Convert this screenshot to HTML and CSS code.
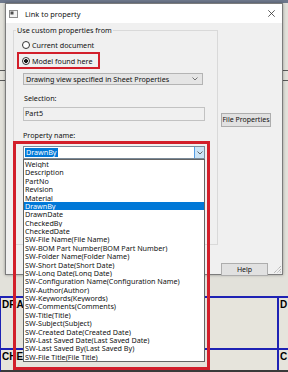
FILE: index.html
```html
<!DOCTYPE html>
<html>
<head>
<meta charset="utf-8">
<link rel="stylesheet" href="styles.css">
</head>
<body>
<div class="desk">
  <div class="top-strip"></div>
  <div class="sheet-upper"><div class="rule-pair"></div></div>
  <div class="title-row row-drawn">
    <div class="cell cell-main">DRA</div>
    <div class="cell cell-side">D</div>
  </div>
  <div class="title-row row-checked">
    <div class="cell cell-main">CHE</div>
    <div class="cell cell-side">C</div>
  </div>

  <div class="dialog">
    <div class="titlebar">
      <svg class="app-icon" width="9" height="8" viewBox="0 0 9 8"><rect x="0.5" y="0.5" width="8" height="7" fill="#f2f2f2" stroke="#8c8c8c"/><rect x="1.5" y="1.5" width="3" height="3" fill="#4d4d4d"/></svg>
      <span class="title">Link to property</span>
      <svg class="close" width="7" height="7" viewBox="0 0 7 7"><path d="M0.3 0.3 L6.7 6.7 M6.7 0.3 L0.3 6.7" stroke="#333" stroke-width="0.8" fill="none"/></svg>
    </div>
    <div class="dialog-body">
      <div class="group">
        <div class="group-label">Use custom properties from</div>
        <div class="radio-row"><span class="radio"></span>Current document</div>
        <div class="radio-row radio-marked"><span class="radio checked"></span>Model found here</div>
        <div class="select"><span>Drawing view specified in Sheet Properties</span><svg class="chev" width="6" height="4" viewBox="0 0 6 4"><path d="M0.5 0.5 L3 3 L5.5 0.5" stroke="#555" stroke-width="0.8" fill="none"/></svg></div>
        <div class="field-label">Selection:</div>
        <div class="textbox">Part5</div>
        <div class="field-label field-label-prop">Property name:</div>
        <div class="combo">
          <span class="combo-value">DrawnBy</span>
          <span class="combo-btn"><svg width="6" height="4" viewBox="0 0 6 4"><path d="M0.5 0.5 L3 3 L5.5 0.5" stroke="#444" stroke-width="0.8" fill="none"/></svg></span>
          <ul class="combo-list">
            <li>Weight</li>
            <li>Description</li>
            <li>PartNo</li>
            <li>Revision</li>
            <li>Material</li>
            <li class="selected">DrawnBy</li>
            <li>DrawnDate</li>
            <li>CheckedBy</li>
            <li>CheckedDate</li>
            <li>SW-File Name(File Name)</li>
            <li>SW-BOM Part Number(BOM Part Number)</li>
            <li>SW-Folder Name(Folder Name)</li>
            <li>SW-Short Date(Short Date)</li>
            <li>SW-Long Date(Long Date)</li>
            <li>SW-Configuration Name(Configuration Name)</li>
            <li>SW-Author(Author)</li>
            <li>SW-Keywords(Keywords)</li>
            <li>SW-Comments(Comments)</li>
            <li>SW-Title(Title)</li>
            <li>SW-Subject(Subject)</li>
            <li>SW-Created Date(Created Date)</li>
            <li>SW-Last Saved Date(Last Saved Date)</li>
            <li>SW-Last Saved By(Last Saved By)</li>
            <li>SW-File Title(File Title)</li>
          </ul>
          <div class="mark-box"></div>
        </div>
      </div>
      <div class="side">
        <button class="btn btn-fileprops">File Properties</button>
        <button class="btn btn-help">Help</button>
      </div>
    </div>
    <svg class="grip" width="8" height="8" viewBox="0 0 8 8"><path d="M8 1 L1 8 M8 4 L4 8 M8 6.5 L6.5 8" stroke="#8a8a8a" stroke-width="0.8" stroke-dasharray="1 0.8" fill="none"/></svg>
  </div>
</div>
</body>
</html>
```

FILE: styles.css
```css
html, body {
  margin: 0;
  padding: 0;
}

body {
  width: 288px;
  height: 372px;
  overflow: hidden;
  font-family: "Noto Sans", "DejaVu Sans", sans-serif;
  font-size: 7.2px;
  color: #111;
}

.desk {
  position: relative;
  width: 288px;
  height: 372px;
  overflow: hidden;
  background: #e4e2da;
  display: flex;
  flex-direction: column;
}

.top-strip {
  height: 3px;
  background: #6e788c;
}

.sheet-upper {
  height: 293px;
  background: #e2e1da;
}

.rule-pair {
  margin-top: 67px;
  height: 9px;
  border-top: 1px solid #5a5a5a;
  border-bottom: 1px solid #5a5a5a;
}

.title-row {
  display: flex;
  border-top: 2px solid #1e22b4;
  border-left: 1px solid #1e22b4;
  background: #e6e4dc;
  font-family: "Liberation Sans", Arial, sans-serif;
  font-weight: bold;
  font-size: 10px;
  line-height: 12px;
  color: #000;
}

.row-drawn {
  height: 50px;
}

.row-checked {
  height: 20px;
  border-bottom: 2px solid #3a3a3a;
}

.cell {
  padding: 1px 0 0 1px;
  overflow: hidden;
  white-space: nowrap;
}

.cell-main {
  width: 275px;
  border-right: 2px solid #1e22b4;
}

.cell-side {
  flex: 1;
}

.dialog {
  position: absolute;
  left: 5px;
  top: 3px;
  width: 278px;
  height: 272px;
  box-sizing: border-box;
  border: 1px solid #7c7c7c;
  background: #f0f0f0;
  box-shadow: 0 0 3px rgba(0, 0, 0, 0.35);
  display: flex;
  flex-direction: column;
}

.titlebar {
  height: 19px;
  flex: none;
  background: #ffffff;
  display: flex;
  align-items: center;
  padding: 0 7px 0 3px;
}

.app-icon {
  display: block;
  flex: none;
}

.title {
  margin-left: 7px;
  font-size: 7.4px;
}

.close {
  display: block;
  margin-left: auto;
}

.dialog-body {
  display: flex;
  align-items: flex-start;
  padding: 7px 0 0 7px;
}

.group {
  width: 205px;
  height: 215px;
  box-sizing: border-box;
  border: 1px solid #d9d9d9;
  flex: none;
}

.group-label {
  margin: -5px 0 0 2px;
  padding: 0 1px;
  width: max-content;
  line-height: 9px;
  height: 9px;
  background: #f0f0f0;
}

.radio-row {
  display: flex;
  align-items: center;
  gap: 2px;
  height: 14px;
  margin-top: 3px;
  padding-left: 8px;
  box-sizing: border-box;
}

.radio-marked {
  margin: 0 0 0 3px;
  width: 83px;
  height: 17px;
  padding-left: 3px;
  border: 2px solid #d21f2b;
}

.radio {
  width: 8px;
  height: 8px;
  box-sizing: border-box;
  border: 1px solid #333;
  border-radius: 50%;
  background: #fff;
  flex: none;
}

.radio.checked {
  background: radial-gradient(circle at center, #1a1a1a 0 1.7px, #ffffff 2.2px);
}

.select {
  margin: 4px 0 0 9px;
  width: 180px;
  height: 12px;
  box-sizing: border-box;
  border: 1px solid #b4b4b4;
  background: #e5e5e5;
  display: flex;
  align-items: center;
  padding: 0 4px 0 2px;
}

.chev {
  display: block;
  margin-left: auto;
}

.field-label {
  margin: 9px 0 0 10px;
  line-height: 9px;
  height: 9px;
}

.field-label-prop {
  margin: 10px 0 0 9px;
}

.textbox {
  margin: 4px 0 0 9px;
  width: 182px;
  height: 14px;
  box-sizing: border-box;
  border: 1px solid #c2c2c2;
  background: #f0f0f0;
  padding: 0 1px;
  line-height: 10px;
}

.combo {
  position: relative;
  margin: 6px 0 0 9px;
  width: 182px;
  height: 13px;
  box-sizing: border-box;
  border: 1px solid #7a8a99;
  background: #ffffff;
  display: flex;
  align-items: center;
}

.combo-value {
  margin-left: 1px;
  padding: 0 1px;
  line-height: 9px;
  background: #0078d7;
  color: #ffffff;
}

.combo-btn {
  margin-left: auto;
  width: 10px;
  height: 100%;
  box-sizing: border-box;
  background: #cce4f7;
  border-left: 1px solid #569de5;
  display: flex;
  align-items: center;
  justify-content: center;
}

.combo-list {
  position: absolute;
  left: -1px;
  top: 12px;
  width: 182px;
  height: 203px;
  box-sizing: border-box;
  margin: 0;
  padding: 0;
  list-style: none;
  border: 1px solid #646464;
  background: #ffffff;
  z-index: 2;
}

.combo-list li {
  height: 8.375px;
  line-height: 8.375px;
  padding-left: 1px;
  white-space: nowrap;
  overflow: hidden;
}

.combo-list li.selected {
  background: #0078d7;
  color: #ffffff;
}

.mark-box {
  position: absolute;
  left: -11px;
  top: -6px;
  width: 197px;
  height: 229px;
  box-sizing: border-box;
  border: 3px solid #d21f2b;
  z-index: 3;
  pointer-events: none;
}

.side {
  margin-left: 3px;
  display: flex;
  flex-direction: column;
  align-items: flex-start;
}

.btn {
  font: inherit;
  font-size: 7px;
  color: #111;
  background: #e1e1e1;
  border: 1px solid #adadad;
  padding: 0;
  margin: 0;
  box-sizing: border-box;
  line-height: 10px;
  white-space: nowrap;
  overflow: hidden;
}

.btn-fileprops {
  margin-top: 83px;
  width: 50px;
  height: 14px;
}

.btn-help {
  margin-top: 136px;
  width: 47px;
  height: 13px;
}

.grip {
  position: absolute;
  right: 1px;
  bottom: 1px;
  display: block;
}
```
